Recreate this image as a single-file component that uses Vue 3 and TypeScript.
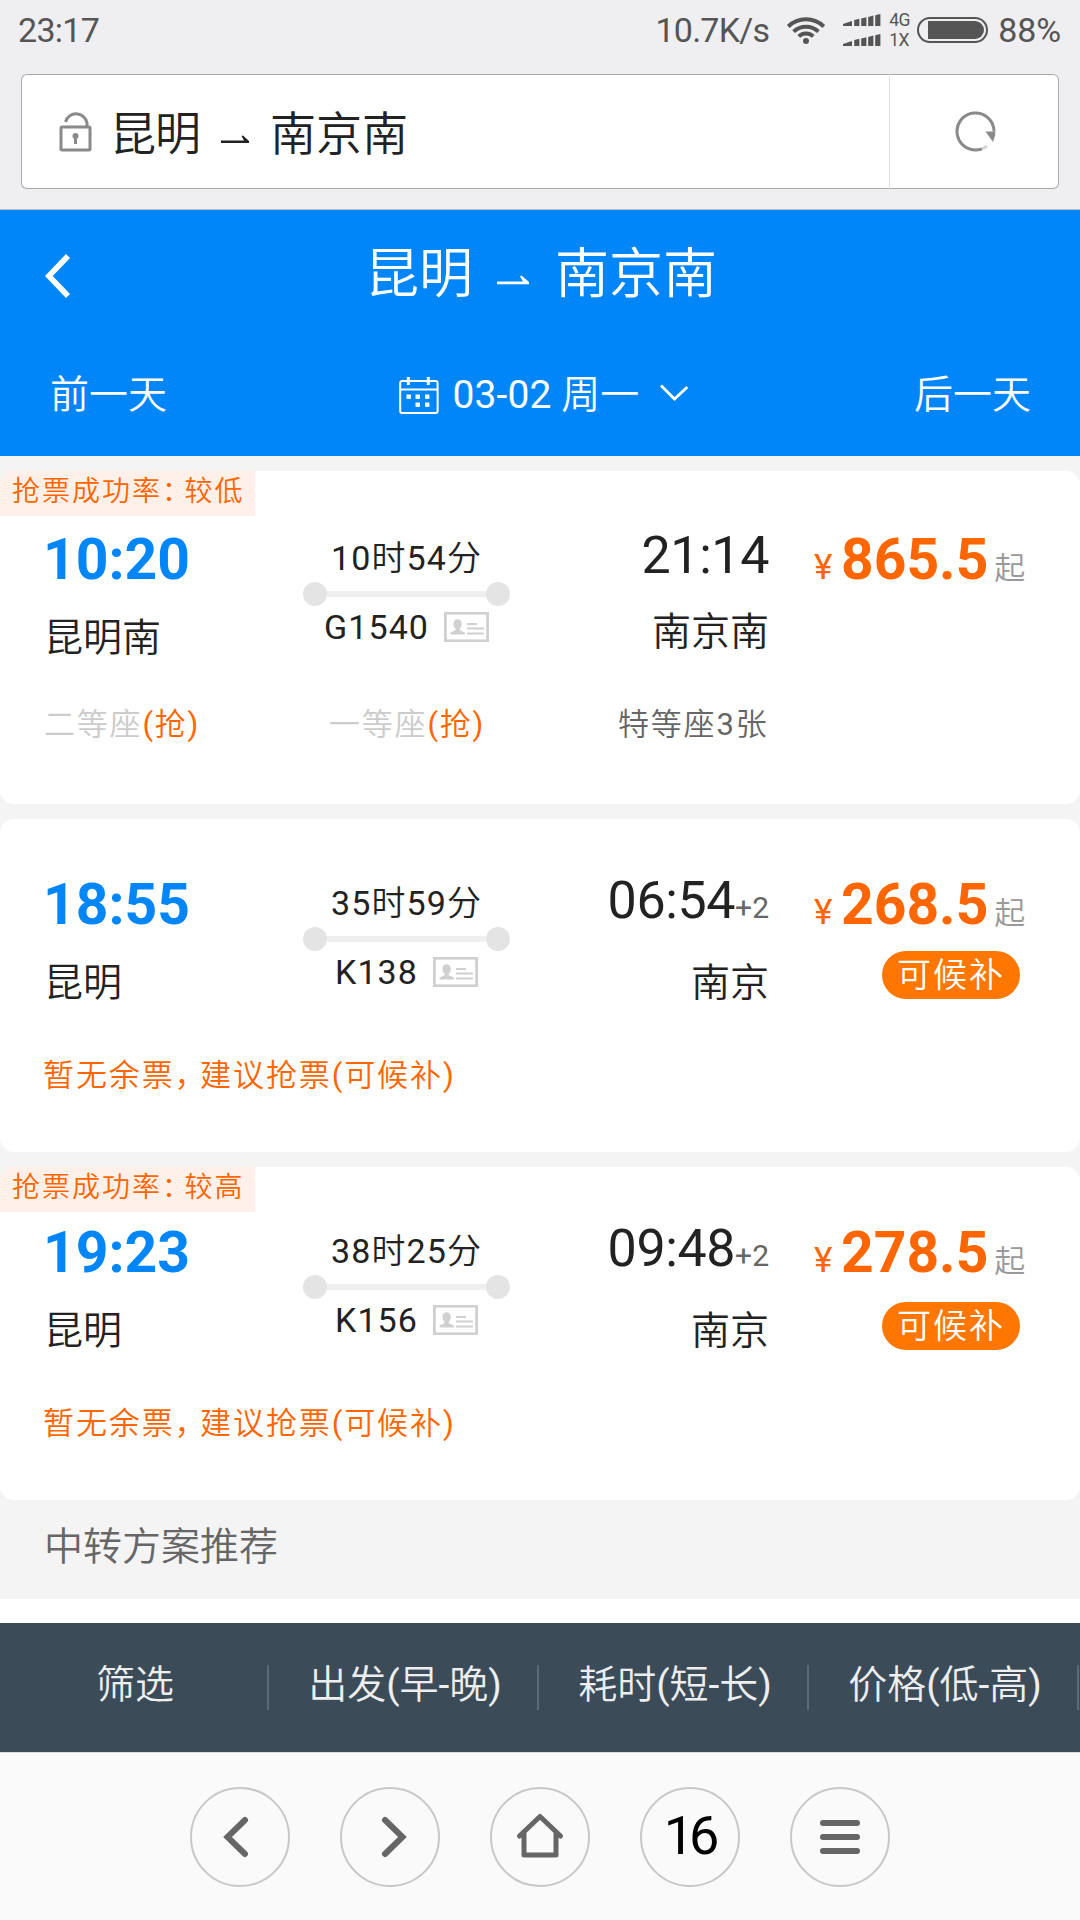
<script setup lang="ts">
interface Seat {
  name: string
  count?: string
  grab?: boolean
}

interface Train {
  depart: string
  from: string
  duration: string
  code: string
  arrive: string
  dayOffset?: string
  to: string
  price: string
  rate?: string
  waitlist?: boolean
  seats: Seat[]
  tight?: boolean
  lowBadge?: boolean
}

const trains: Train[] = [
  {
    depart: '10:20',
    from: '昆明南',
    duration: '10时54分',
    code: 'G1540',
    arrive: '21:14',
    to: '南京南',
    price: '865.5',
    rate: '较低',
    seats: [
      { name: '二等座', grab: true },
      { name: '一等座', grab: true },
      { name: '特等座', count: '3张' },
    ],
    tight: true,
  },
  {
    depart: '18:55',
    from: '昆明',
    duration: '35时59分',
    code: 'K138',
    arrive: '06:54',
    dayOffset: '+2',
    to: '南京',
    price: '268.5',
    waitlist: true,
    seats: [],
  },
  {
    depart: '19:23',
    from: '昆明',
    duration: '38时25分',
    code: 'K156',
    arrive: '09:48',
    dayOffset: '+2',
    to: '南京',
    price: '278.5',
    rate: '较高',
    waitlist: true,
    seats: [],
    lowBadge: true,
  },
]

const sorts: string[] = ['筛选', '出发(早-晚)', '耗时(短-长)', '价格(低-高)']
const bars: number[] = [0, 1, 2, 3, 4]
</script>

<template>
  <div class="screen">
    <div class="status">
      <span class="clock">23:17</span>
      <span class="speed">10.7K/s</span>
      <svg class="wifi" width="40" height="30" viewBox="0 0 40 30" fill="none" stroke="#555" stroke-width="4">
        <path d="M2.3 11.5A25.5 25.5 0 0 1 37.7 11.5" />
        <path d="M7.6 16.6A18 18 0 0 1 32.4 16.6" />
        <path d="M12.8 21.4A10.6 10.6 0 0 1 27.2 21.4" />
        <circle cx="20" cy="26" r="3" fill="#555" stroke="none" />
      </svg>
      <div class="signals">
        <svg v-for="row in 2" :key="row" width="38" height="12" viewBox="0 0 38 12" fill="#555">
          <path
            v-for="b in bars"
            :key="b"
            :d="b === 0 ? 'M0 12V10L9 7V12Z' : `M${4.2 + b * 7} 12V${7.7 - b * 1.6}L${9.4 + b * 7} ${6.4 - b * 1.6}V12Z`"
          />
        </svg>
      </div>
      <div class="nets"><span>4G</span><span>1X</span></div>
      <div class="battery"><i></i></div>
      <span class="percent">88%</span>
    </div>

    <div class="address">
      <div class="url">
        <svg class="lock" width="34" height="42" viewBox="0 0 34 42" fill="none" stroke="#8a8a8a" stroke-width="3">
          <rect x="2" y="17" width="29" height="23" rx="1" />
          <path d="M6.5 12A11 11 0 0 1 28 13V17" />
          <circle cx="16.5" cy="26" r="3" fill="#8a8a8a" stroke="none" />
          <path d="M16.5 26V34" />
        </svg>
        <span class="city">昆明</span>
        <svg class="harpoon" width="28" height="10" viewBox="0 0 28 10" fill="currentColor">
          <path d="M0 5.5H23L20.5 1L22 0.5L28 6V8H0Z" />
        </svg>
        <span>南京南</span>
      </div>
      <div class="reload">
        <svg width="42" height="42" viewBox="0 0 42 42" fill="none" stroke="#8a8a8a" stroke-width="3">
          <path d="M39 20.5A18.5 18.5 0 1 0 27 37.8" />
          <path d="M27 37.8Q30 36.7 32 34.8" stroke="#d6d6d6" />
          <path d="M30.5 20.5H40.2V24L38 31Z" fill="#8a8a8a" stroke="none" />
        </svg>
      </div>
    </div>

    <header class="head">
      <div class="title">
        <svg class="back" width="26" height="44" viewBox="0 0 26 44" fill="none" stroke="#fff" stroke-width="5.6">
          <path d="M23 2L3.8 22L23 42" />
        </svg>
        <span>昆明</span>
        <svg class="harpoon" width="32" height="11" viewBox="0 0 32 11" fill="currentColor">
          <path d="M0 6.5H26L23 1.5L24.5 0.5L32 7V9.3H0Z" />
        </svg>
        <span>南京南</span>
      </div>
      <div class="days">
        <span>前一天</span>
        <div class="date">
          <svg width="40" height="38" viewBox="0 0 40 38" fill="none" stroke="#fff" stroke-width="2">
            <rect x="1.2" y="4" width="37.4" height="32" rx="2" />
            <path d="M1 12.5H39" />
            <path d="M9.3 0V8M29.3 0V8" stroke-width="3" />
            <g fill="#fff" stroke="none">
              <rect x="7.5" y="17.5" width="4.4" height="4.4" /><rect x="16.5" y="17.5" width="4.4" height="4.4" /><rect x="26" y="17.5" width="4.4" height="4.4" />
              <rect x="16.5" y="25.5" width="4.4" height="4.4" /><rect x="26" y="25.5" width="4.4" height="4.4" />
            </g>
          </svg>
          <span>03-02 周一</span>
          <svg class="down" width="28" height="18" viewBox="0 0 28 18" fill="none" stroke="#fff" stroke-width="2.8">
            <path d="M1 1.5L14.5 15L27.3 3" />
          </svg>
        </div>
        <span>后一天</span>
      </div>
    </header>

    <main class="list">
      <article v-for="t in trains" :key="t.code" class="card" :class="{ tight: t.tight, low: t.lowBadge }">
        <div v-if="t.rate" class="rate">抢票成功率<span class="colon">：</span>{{ t.rate }}</div>
        <div class="info">
          <div class="from">
            <b>{{ t.depart }}</b>
            <span>{{ t.from }}</span>
          </div>
          <div class="route">
            <span class="duration">{{ t.duration }}</span>
            <div class="track"><i></i><em></em><i></i></div>
            <div class="code">
              <span>{{ t.code }}</span>
              <svg width="45" height="30" viewBox="0 0 45 30" fill="none" stroke="#d0d0d0" stroke-width="2.4">
                <rect x="1.4" y="1.2" width="42.2" height="27.6" stroke-width="2.8" />
                <path d="M23 12H33M23 16.5H40M23 21.5H40" stroke-width="2" />
                <path d="M13.5 7.2c2.7 0 4.3 2 4.3 4.7 0 2-.9 3.5-2 4.6v1.7l5 2.2V22.5H6.5V20.4l5-2.2v-1.7c-1.3-1.1-2-2.6-2-4.6 0-2.7 1.5-4.7 4-4.7z" fill="#d0d0d0" stroke="none" />
              </svg>
            </div>
          </div>
          <div class="to">
            <div class="arrive">{{ t.arrive }}<small v-if="t.dayOffset">{{ t.dayOffset }}</small></div>
            <span>{{ t.to }}</span>
          </div>
          <div class="fare">
            <div class="price"><span class="yen">¥</span><b>{{ t.price }}</b><span class="from-price">起</span></div>
            <span v-if="t.waitlist" class="badge">可候补</span>
          </div>
        </div>
        <div v-if="t.seats.length" class="seats">
          <span v-for="s in t.seats" :key="s.name" :class="{ sold: s.grab }">{{ s.name }}<em v-if="s.grab">(抢)</em>{{ s.count }}</span>
        </div>
        <div v-else class="notice">暂无余票<span class="comma">，</span>建议抢票(可候补)</div>
      </article>
      <h2>中转方案推荐</h2>
    </main>

    <nav class="sorts">
      <div v-for="s in sorts" :key="s"><span>{{ s }}</span></div>
    </nav>

    <footer class="browser">
      <div class="btn">
        <svg width="100" height="100" viewBox="0 0 100 100"><path d="M55 33L37.5 50L55 67" /></svg>
      </div>
      <div class="btn">
        <svg width="100" height="100" viewBox="0 0 100 100"><path d="M45 33L62.5 50L45 67" /></svg>
      </div>
      <div class="btn">
        <svg width="100" height="100" viewBox="0 0 100 100" class="home"><path d="M29.5 49L50 29.5L70.5 49M34 46V68H66V46" /></svg>
      </div>
      <div class="btn"><span>16</span></div>
      <div class="btn">
        <svg width="100" height="100" viewBox="0 0 100 100" class="menu"><path d="M33 36H67M33 50H67M33 64H67" /></svg>
      </div>
    </footer>
  </div>
</template>

<style>
body {
  margin: 0;
  background: #fff;
}
</style>

<style scoped>
.screen {
  display: flex;
  flex-direction: column;
  width: 1080px;
  height: 1920px;
  overflow: hidden;
  background: #fff;
  color: #222;
  font-family: Roboto, "Noto Sans CJK SC DemiLight", "Noto Sans CJK SC", sans-serif;
  font-weight: 400;
  white-space: nowrap;
}
svg {
  display: block;
  flex: none;
}
.status {
  display: flex;
  align-items: center;
  height: 60px;
  padding: 0 19px 0 18px;
  box-sizing: border-box;
  background: #efeff1;
  color: #555;
  font-size: 34px;
}
.clock {
  letter-spacing: -0.7px;
}
.speed {
  margin-left: auto;
  margin-right: 17px;
  letter-spacing: -0.8px;
}
.signals {
  display: flex;
  flex-direction: column;
  gap: 8px;
  margin: 0 8px 0 17px;
}
.nets {
  display: flex;
  flex-direction: column;
  width: 28px;
  font-size: 17.5px;
  line-height: 20px;
  letter-spacing: -0.5px;
}
.battery {
  width: 67px;
  height: 22px;
  border: 2px solid #555;
  border-radius: 13px;
  display: flex;
  align-items: center;
  margin-right: 10px;
}
.battery i {
  width: 56px;
  height: 18px;
  margin-left: 9px;
  border-radius: 0 9px 9px 0;
  background: #555;
}
.percent {
  letter-spacing: -0.1px;
}
.address {
  display: flex;
  height: 150px;
  padding: 14px 21px 20px;
  box-sizing: border-box;
  background: #efeff1;
  border-bottom: 1px solid #c0c0c2;
}
.url,
.reload {
  display: flex;
  align-items: center;
  box-sizing: border-box;
  border: 1px solid #a9a9ab;
  background: #fff;
}
.url {
  flex: 1;
  border-right-color: #ddd;
  border-radius: 6px 0 0 6px;
  padding-left: 37px;
  font-size: 46px;
}
.url span {
  margin-top: -4px;
}
.url .city {
  letter-spacing: -1px;
}
.lock {
  margin: -2px 17px 0 0;
}
.url .harpoon {
  margin: 17px 21px 0 21px;
}
.reload {
  width: 169px;
  justify-content: center;
  padding-left: 3px;
  border-left: 0;
  border-radius: 0 6px 6px 0;
}
.head {
  height: 246px;
  background: #0086f9;
  color: #fff;
}
.title {
  display: flex;
  align-items: center;
  height: 126px;
  font-size: 54px;
}
.title span {
  margin-top: -8px;
}
.back {
  margin: 6px 294px 0 45px;
}
.title .harpoon {
  margin: 15px 26px 0 24px;
}
.days {
  display: flex;
  align-items: center;
  justify-content: space-between;
  height: 116px;
  padding: 0 49px 0 50px;
  font-size: 39px;
}
.days span {
  margin-top: -6px;
}
.date {
  display: flex;
  align-items: center;
  padding-left: 6px;
}
.date svg {
  margin-top: 4px;
}
.date .down {
  margin-top: -3px;
}
.date span {
  margin: -6px 21px 0 14px;
  letter-spacing: 0.1px;
}
.list {
  height: 1143px;
  background: #f4f4f4;
}
.card {
  position: relative;
  height: 333px;
  box-sizing: border-box;
  margin-top: 15px;
  padding-top: 52px;
  border-radius: 14px;
  overflow: hidden;
  background: #fff;
}
.tight {
  padding-top: 55px;
}
.rate {
  position: absolute;
  top: 0;
  left: 0;
  width: 255px;
  height: 45px;
  box-sizing: border-box;
  padding-left: 12px;
  background: #fff0ea;
  color: #f60;
  font-size: 28px;
  line-height: 42px;
  letter-spacing: 2px;
}
.colon {
  letter-spacing: -5.5px;
}
.info {
  display: flex;
  height: 166px;
}
.from {
  width: 287px;
  padding-left: 43px;
  box-sizing: border-box;
}
.from b {
  display: block;
  height: 66px;
  color: #0086f9;
  font-size: 57px;
  line-height: 68px;
  font-weight: 700;
}
.from span {
  display: block;
  margin: 18px 0 0 1px;
  font-size: 39px;
  line-height: 57px;
}
.route {
  width: 239px;
  display: flex;
  flex-direction: column;
  align-items: center;
}
.duration {
  height: 50px;
  margin-top: 8px;
  font-size: 34px;
  line-height: 48px;
  letter-spacing: 1.1px;
}
.track {
  display: flex;
  align-items: center;
  width: 207px;
  margin-top: -2px;
}
.track i {
  width: 24px;
  height: 24px;
  border-radius: 50%;
  background: #e4e4e4;
}
.track em {
  flex: 1;
  height: 6px;
  background: #efefef;
}
.code {
  display: flex;
  align-items: center;
  gap: 15px;
  height: 42px;
  font-size: 34px;
  line-height: 42px;
  letter-spacing: 1.1px;
}
.to {
  width: 243px;
  text-align: right;
}
.arrive {
  height: 60px;
  font-size: 52px;
  line-height: 60px;
  letter-spacing: -0.4px;
}
.arrive small {
  font-size: 30px;
  color: #666;
  letter-spacing: 0;
}
.to > span {
  display: block;
  margin-top: 24px;
  font-size: 39px;
  line-height: 56px;
}
.tight .to > span {
  margin-top: 18px;
}
.fare {
  padding-left: 45px;
}
.price {
  display: flex;
  align-items: baseline;
  height: 66px;
  line-height: 68px;
  color: #f60;
}
.yen {
  width: 27px;
  font-size: 35px;
}
.price b {
  font-size: 57px;
  font-weight: 700;
}
.from-price {
  margin-left: 6px;
  color: #999;
  font-size: 31px;
}
.badge {
  display: block;
  width: 138px;
  height: 48px;
  box-sizing: border-box;
  margin: 14px 0 0 68px;
  padding-left: 15px;
  border-radius: 24px;
  background: #f70;
  color: #fff;
  font-size: 34px;
  line-height: 48px;
  letter-spacing: 2px;
}
.low .badge {
  margin-top: 17px;
}
.seats {
  display: flex;
  padding: 3px 0 0 44px;
  font-size: 31px;
  line-height: 60px;
  letter-spacing: 1.8px;
  color: #666;
}
.seats span {
  flex: none;
  width: 285px;
}
.seats span + span {
  width: 289px;
}
.seats .sold {
  color: #ccc;
}
.seats em {
  font-style: normal;
  color: #f60;
}
.notice {
  padding: 9px 0 0 43px;
  color: #f60;
  font-size: 31px;
  line-height: 60px;
  letter-spacing: 1.9px;
}
.comma {
  letter-spacing: -5.5px;
}
h2 {
  margin: 0;
  height: 99px;
  padding-left: 44px;
  font-size: 39px;
  line-height: 94px;
  font-weight: 400;
  color: #666;
}
.sorts {
  display: flex;
  height: 129px;
  margin-top: 24px;
  background: #3c4b58;
  color: #eceef0;
  font-size: 39px;
}
.sorts div {
  display: flex;
  flex: none;
  align-items: center;
  justify-content: center;
  width: 269px;
  margin-right: 1px;
  height: 45px;
  margin-top: 42px;
  padding-left: 3px;
  border-right: 2px solid #5d6a75;
  box-sizing: border-box;
}
.sorts span {
  margin-top: -14px;
}
.browser {
  display: flex;
  justify-content: center;
  gap: 50px;
  height: 168px;
  padding-top: 34px;
  box-sizing: border-box;
  border-top: 1px solid #dcdcdc;
  background: #fafafa;
}
.btn {
  width: 100px;
  height: 100px;
  box-sizing: border-box;
  border: 2px solid #c8c8c8;
  border-radius: 50%;
  display: flex;
  align-items: center;
  justify-content: center;
}
.btn svg {
  margin: -2px;
  fill: none;
  stroke: #666;
  stroke-width: 6;
  stroke-linecap: round;
}
.btn .home {
  stroke-width: 5;
  stroke-linejoin: round;
}
.btn span {
  margin: -3px 0 0 -2px;
  color: #000;
  font-size: 54px;
  letter-spacing: -5px;
}
</style>
